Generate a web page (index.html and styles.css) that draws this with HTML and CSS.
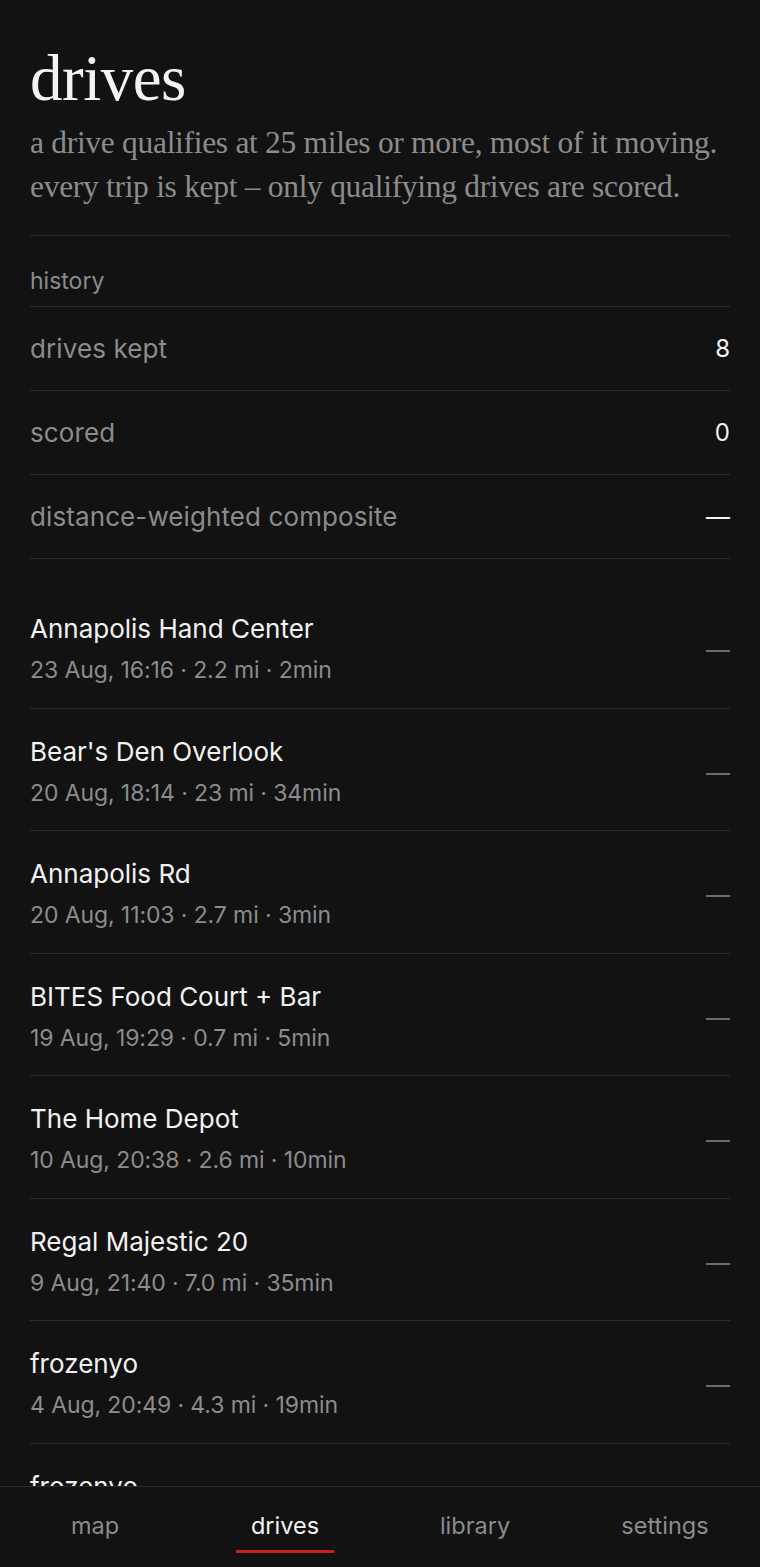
FILE: index.html
```html
<!DOCTYPE html>
<html lang="en">
<head>
    <meta charset="UTF-8">
    <meta name="viewport" content="width=device-width, initial-scale=1.0">
    <title>drives</title>
    <link rel="stylesheet" href="styles.css">
</head>
<body>

    <div class="page">
        <!-- Header -->
        <header class="header">
            <h1>drives</h1>
            <p class="intro">a drive qualifies at 25 miles or more, most of it moving.<br>every trip is kept &ndash; only qualifying drives are scored.</p>
        </header>

        <!-- History stats -->
        <section class="stats">
            <div class="section-label">history</div>
            <div class="stat-row">
                <span class="stat-name">drives kept</span>
                <span class="stat-value">8</span>
            </div>
            <div class="stat-row">
                <span class="stat-name">scored</span>
                <span class="stat-value">0</span>
            </div>
            <div class="stat-row">
                <span class="stat-name">distance-weighted composite</span>
                <span class="stat-value">&mdash;</span>
            </div>
        </section>

        <!-- Drive list -->
        <div class="drive-list">
            <div class="drive-item">
                <div>
                    <div class="drive-title">Annapolis Hand Center</div>
                    <div class="drive-meta">23 Aug, 16:16 · 2.2 mi · 2min</div>
                </div>
                <span class="drive-score">&mdash;</span>
            </div>
            <div class="drive-item">
                <div>
                    <div class="drive-title">Bear's Den Overlook</div>
                    <div class="drive-meta">20 Aug, 18:14 · 23 mi · 34min</div>
                </div>
                <span class="drive-score">&mdash;</span>
            </div>
            <div class="drive-item">
                <div>
                    <div class="drive-title">Annapolis Rd</div>
                    <div class="drive-meta">20 Aug, 11:03 · 2.7 mi · 3min</div>
                </div>
                <span class="drive-score">&mdash;</span>
            </div>
            <div class="drive-item">
                <div>
                    <div class="drive-title">BITES Food Court + Bar</div>
                    <div class="drive-meta">19 Aug, 19:29 · 0.7 mi · 5min</div>
                </div>
                <span class="drive-score">&mdash;</span>
            </div>
            <div class="drive-item">
                <div>
                    <div class="drive-title">The Home Depot</div>
                    <div class="drive-meta">10 Aug, 20:38 · 2.6 mi · 10min</div>
                </div>
                <span class="drive-score">&mdash;</span>
            </div>
            <div class="drive-item">
                <div>
                    <div class="drive-title">Regal Majestic 20</div>
                    <div class="drive-meta">9 Aug, 21:40 · 7.0 mi · 35min</div>
                </div>
                <span class="drive-score">&mdash;</span>
            </div>
            <div class="drive-item">
                <div>
                    <div class="drive-title">frozenyo</div>
                    <div class="drive-meta">4 Aug, 20:49 · 4.3 mi · 19min</div>
                </div>
                <span class="drive-score">&mdash;</span>
            </div>
            <!-- last row is cut by the tab bar -->
            <div class="drive-item partial">
                <div class="drive-title">frozenyo</div>
            </div>
        </div>
    </div>

    <!-- Bottom tabs -->
    <nav class="tabbar">
        <a class="tab">map</a>
        <a class="tab active">drives</a>
        <a class="tab">library</a>
        <a class="tab">settings</a>
    </nav>

</body>
</html>
```

FILE: styles.css
```css
* {
    box-sizing: border-box;
    margin: 0;
    padding: 0;
}

body {
    font-family: 'Inter', 'Liberation Sans', sans-serif;
    background-color: #121212;
    color: #f2f2f2;
    height: 100vh;
    display: flex;
    flex-direction: column;
    overflow: hidden;
}

.page {
    flex: 1;
    min-height: 0;
    overflow: hidden;
    padding: 47px 30px 0;
}

/* Header */
.header {
    padding-bottom: 26px;
    border-bottom: 1px solid #2c2c2c;
}

h1 {
    font-family: 'Liberation Serif', serif;
    font-weight: normal;
    font-size: 65px;
    line-height: 62px;
    color: #f4f4f4;
    letter-spacing: -0.5px;
}

.intro {
    font-family: 'Liberation Serif', serif;
    font-size: 31.5px;
    line-height: 44px;
    margin-top: 12px;
    color: #8c8c8c;
    letter-spacing: -0.3px;
}

/* Stats */
.section-label {
    font-size: 23px;
    line-height: 26px;
    color: #8c8c8c;
    padding: 32px 0 12px;
    border-bottom: 1px solid #2c2c2c;
}

.stat-row {
    height: 84px;
    display: flex;
    justify-content: space-between;
    align-items: center;
    border-bottom: 1px solid #2c2c2c;
}

.stat-name {
    font-size: 26px;
    color: #8c8c8c;
    letter-spacing: 0.1px;
}

.stat-value {
    font-size: 24px;
    color: #f2f2f2;
}

/* Drives */
.drive-list {
    margin-top: 27px;
}

.drive-item {
    height: 122.5px;
    padding: 27px 0 21px;
    display: flex;
    justify-content: space-between;
    align-items: center;
    border-bottom: 1px solid #2c2c2c;
}

.drive-item.partial {
    align-items: flex-start;
}

.drive-title {
    font-size: 26px;
    line-height: 32px;
    color: #f2f2f2;
}

.drive-meta {
    font-size: 23px;
    line-height: 32px;
    margin-top: 9px;
    color: #8c8c8c;
    letter-spacing: -0.1px;
}

.drive-score {
    font-size: 24px;
    color: #6c6c6c;
}

/* Tab bar */
.tabbar {
    flex-shrink: 0;
    height: 81px;
    background-color: #121212;
    border-top: 1px solid #2c2c2c;
    display: grid;
    grid-template-columns: repeat(4, 1fr);
}

.tab {
    justify-self: center;
    align-self: start;
    margin-top: 24px;
    padding: 0 15px 9px;
    font-size: 23.5px;
    line-height: 30px;
    color: #8c8c8c;
    border-bottom: 3px solid transparent;
}

.tab.active {
    color: #f4f4f4;
    border-bottom-color: #c8201e;
}
```
